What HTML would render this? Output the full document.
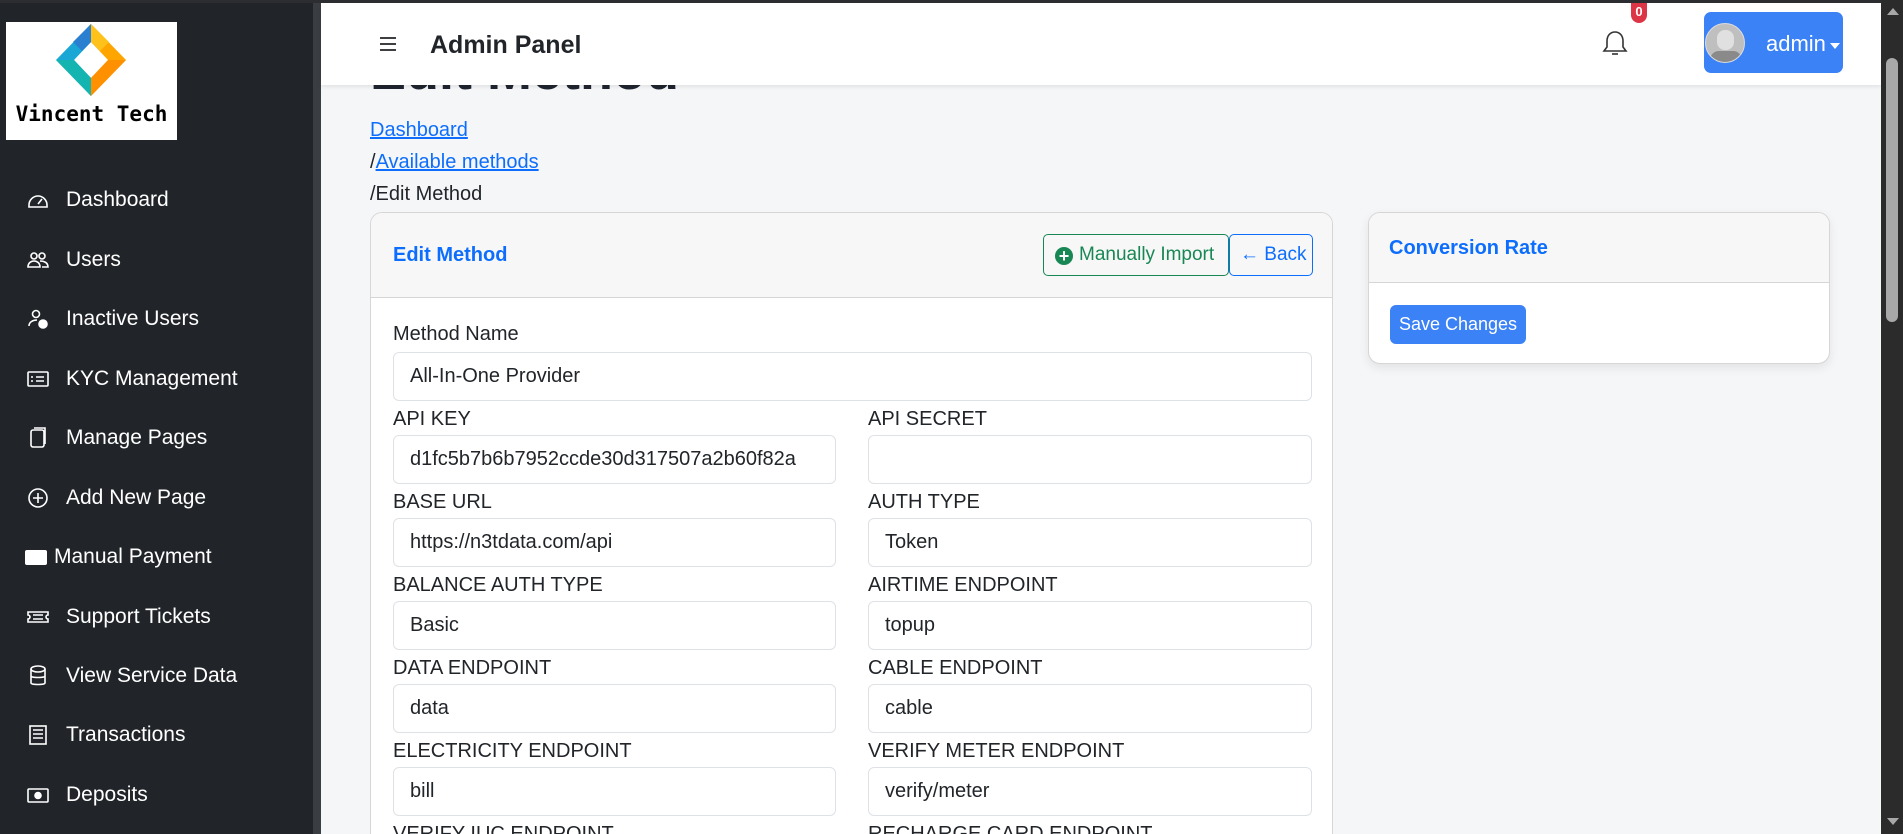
<!DOCTYPE html>
<html><head><meta charset="utf-8"><style>
*{box-sizing:border-box;margin:0;padding:0}
html{width:1903px;height:834px;overflow:hidden}
body{width:1903px;height:834px;overflow:hidden;font-family:"Liberation Sans",sans-serif;background:#f5f6f8;position:relative;color:#212529}
.top{position:absolute;left:0;top:0;width:1903px;height:3px;background:#2b2d31;z-index:20}
.side{position:absolute;left:0;top:0;width:313px;height:834px;background:#212529}
.sbar{position:absolute;left:313px;top:0;width:8px;height:834px;background:#3a3d42}
.logo{position:absolute;left:6px;top:22px;width:171px;height:118px;background:#fff;overflow:hidden}
.logo .t{position:absolute;left:0;right:0;top:80px;text-align:center;font:bold 21px "DejaVu Sans Mono","Liberation Mono",monospace;letter-spacing:0;white-space:nowrap;color:#000}
.mi{position:absolute;left:26px;color:#fff;font-size:21px;display:flex;align-items:center}
.mi svg{width:24px;height:24px;margin-right:16px}
.hdr{position:absolute;left:321px;top:3px;width:1560px;height:82px;background:#fff;box-shadow:0 2px 4px rgba(0,0,0,.08);z-index:10}
h1{position:absolute;left:370px;top:40px;font-size:54px;font-weight:bold;color:#1f2530}
.bc{position:absolute;left:370px;font-size:20px}
.bc a{color:#0d6efd;text-decoration:underline}
.card{position:absolute;background:#fff;border:1px solid #d6d6d6;border-radius:12px;overflow:hidden}
.ch{background:#f7f7f7;border-bottom:1px solid #d6d6d6;position:relative}
.ct{position:absolute;color:#0d6efd;font-weight:bold;font-size:20px}
.lbl{position:absolute;font-size:20px;color:#212529}
.inp{position:absolute;height:49px;border:1px solid #dee2e6;border-radius:6px;padding-left:16px;font-size:20px;line-height:47px;color:#212529;background:#fff}
.vs{position:absolute;left:1881px;top:0;width:22px;height:834px;background:#2b2b2b;z-index:30}
</style></head><body>
<div class="top"></div>
<div class="side">
<div class="logo">
<svg width="171" height="80" viewBox="0 0 171 80" style="position:absolute;left:0;top:0">
<polygon points="85,2 50,38 85,74 85,56 68,38 85,20" fill="#1aa7d6"/>
<polygon points="50,38 85,74 85,56 68,38" fill="#14b5b0"/>
<polygon points="85,2 120,38 85,74 85,56 102,38 85,20" fill="#ffa500"/>
<polygon points="120,38 85,74 85,56 102,38" fill="#ff9000"/>
<polygon points="85,2 67,20 76,29 85,20" fill="#2a7fd1"/>
<polygon points="85,2 103,20 94,29 85,20" fill="#ffc21a"/>
</svg>
<div class="t">Vincent Tech</div></div>
</div>
<div class="sbar"></div>
<div class="mi" style="top:188px"><svg viewBox="0 0 24 24" fill="none" stroke="#fff" stroke-width="1.6"><path d="M3 17a9 9 0 1 1 18 0v2H3z"/><path d="M12 16l4-5"/></svg>Dashboard</div>
<div class="mi" style="top:248px"><svg viewBox="0 0 24 24" fill="none" stroke="#fff" stroke-width="1.6"><circle cx="8" cy="8" r="3"/><circle cx="16" cy="8" r="3"/><path d="M2 19c0-4 3-6 6-6s6 2 6 6zM14 13c3 0 8 1 8 6h-6"/></svg>Users</div>
<div class="mi" style="top:307px"><svg viewBox="0 0 24 24" fill="none" stroke="#fff" stroke-width="1.6"><circle cx="10" cy="7" r="3.5"/><path d="M3 19c0-4 4-6 8-6"/><circle cx="17" cy="17" r="4" fill="#fff"/></svg>Inactive Users</div>
<div class="mi" style="top:367px"><svg viewBox="0 0 24 24" fill="none" stroke="#fff" stroke-width="1.6"><rect x="2" y="5" width="20" height="14" rx="1"/><path d="M10 10h8M10 14h8M5 10h2M5 14h2"/></svg>KYC Management</div>
<div class="mi" style="top:426px"><svg viewBox="0 0 24 24" fill="none" stroke="#fff" stroke-width="1.6"><rect x="5" y="4" width="13" height="17" rx="2"/><path d="M8 2h11v16"/></svg>Manage Pages</div>
<div class="mi" style="top:486px"><svg viewBox="0 0 24 24" fill="none" stroke="#fff" stroke-width="1.6"><circle cx="12" cy="12" r="9"/><path d="M12 7v10M7 12h10"/></svg>Add New Page</div>
<div class="mi" style="top:545px;left:24px"><svg viewBox="0 0 24 24" fill="#fff" style="margin-right:6px"><rect x="1" y="5" width="22" height="15" rx="2"/></svg>Manual Payment</div>
<div class="mi" style="top:605px"><svg viewBox="0 0 24 24" fill="none" stroke="#fff" stroke-width="1.6"><path d="M2 7h20v3a2 2 0 0 0 0 4v3H2v-3a2 2 0 0 0 0-4z"/><path d="M7 10h10M7 14h10"/></svg>Support Tickets</div>
<div class="mi" style="top:664px"><svg viewBox="0 0 24 24" fill="none" stroke="#fff" stroke-width="1.6"><ellipse cx="12" cy="5" rx="7" ry="3"/><path d="M5 5v14c0 2 14 2 14 0V5M5 12c0 2 14 2 14 0"/></svg>View Service Data</div>
<div class="mi" style="top:723px"><svg viewBox="0 0 24 24" fill="none" stroke="#fff" stroke-width="1.6"><rect x="4" y="3" width="16" height="18"/><path d="M7 7h10M7 11h10M7 15h10"/></svg>Transactions</div>
<div class="mi" style="top:783px"><svg viewBox="0 0 24 24" fill="none" stroke="#fff" stroke-width="1.6"><rect x="2" y="6" width="20" height="13" rx="1"/><circle cx="12" cy="12.5" r="3" fill="#fff"/></svg>Deposits</div>

<h1>Edit Method</h1>
<div class="hdr">
<svg style="position:absolute;left:58px;top:33px" width="18" height="16" viewBox="0 0 18 16" stroke="#212529" stroke-width="1.8"><path d="M1 2h16M1 8h16M1 14h16"/></svg>
<div style="position:absolute;left:109px;top:28px;font-size:25px;font-weight:bold;color:#212529">Admin Panel</div>
<svg style="position:absolute;left:1281px;top:26px" width="26" height="30" viewBox="0 0 26 30" fill="none" stroke="#333" stroke-width="1.6"><path d="M13 3c-5 0-8 4-8 9v6l-3 4h22l-3-4v-6c0-5-3-9-8-9z"/><path d="M10 25h6"/></svg>
<div style="position:absolute;left:1310px;top:0;width:16px;height:20px;background:#dc3545;border-radius:0 0 8px 8px;color:#fff;font-size:13px;font-weight:bold;text-align:center;line-height:18px">0</div>
<div style="position:absolute;left:1383px;top:9px;width:139px;height:61px;background:#3b82f6;border-radius:7px">
<div style="position:absolute;left:1px;top:11px;width:40px;height:40px;border-radius:50%;border:1px solid #ddd;background:#bfbfbf;overflow:hidden"><div style="position:absolute;left:11px;top:6px;width:17px;height:20px;border-radius:8px;background:#e0e0e0"></div><div style="position:absolute;left:4px;top:27px;width:32px;height:18px;border-radius:10px;background:#8a8a8a"></div></div>
<div style="position:absolute;left:62px;top:19px;color:#fff;font-size:22px">admin</div>
<div style="position:absolute;left:126px;top:31px;border:5px solid transparent;border-top:6px solid #fff"></div>
</div>
</div>

<div class="bc" style="top:119px"><a>Dashboard</a></div>
<div class="bc" style="top:151px">/<a>Available methods</a></div>
<div class="bc" style="top:183px">/Edit Method</div>

<div class="card" style="left:370px;top:212px;width:963px;height:640px">
<div class="ch" style="height:85px">
<div class="ct" style="left:22px;top:31px">Edit Method</div>
<div style="position:absolute;left:672px;top:21px;width:186px;height:42px;border:1px solid #198754;border-radius:5px;color:#198754;font-size:19px;line-height:40px;padding-left:11px"><span style="display:inline-block;width:18px;height:18px;border-radius:50%;background:#198754;color:#fff;font-weight:bold;font-size:18px;line-height:18px;text-align:center;vertical-align:-2px;margin-right:6px">+</span>Manually Import</div>
<div style="position:absolute;left:858px;top:21px;width:84px;height:42px;border:1px solid #0d6efd;border-radius:5px;color:#0d6efd;font-size:19px;line-height:40px;padding-left:10px"><b>&#8592;</b> Back</div>
</div>
</div>
<div class="lbl" style="left:393px;top:323px">Method Name</div>
<div class="inp" style="left:393px;top:352px;width:919px">All-In-One Provider</div>

<div class="lbl" style="left:393px;top:408px">API KEY</div><div class="lbl" style="left:868px;top:408px">API SECRET</div>
<div class="inp" style="left:393px;top:435px;width:443px;overflow:hidden;white-space:nowrap">d1fc5b7b6b7952ccde30d317507a2b60f82a</div><div class="inp" style="left:868px;top:435px;width:444px"></div>

<div class="lbl" style="left:393px;top:491px">BASE URL</div><div class="lbl" style="left:868px;top:491px">AUTH TYPE</div>
<div class="inp" style="left:393px;top:518px;width:443px">https://n3tdata.com/api</div><div class="inp" style="left:868px;top:518px;width:444px">Token</div>

<div class="lbl" style="left:393px;top:574px">BALANCE AUTH TYPE</div><div class="lbl" style="left:868px;top:574px">AIRTIME ENDPOINT</div>
<div class="inp" style="left:393px;top:601px;width:443px">Basic</div><div class="inp" style="left:868px;top:601px;width:444px">topup</div>

<div class="lbl" style="left:393px;top:657px">DATA ENDPOINT</div><div class="lbl" style="left:868px;top:657px">CABLE ENDPOINT</div>
<div class="inp" style="left:393px;top:684px;width:443px">data</div><div class="inp" style="left:868px;top:684px;width:444px">cable</div>

<div class="lbl" style="left:393px;top:740px">ELECTRICITY ENDPOINT</div><div class="lbl" style="left:868px;top:740px">VERIFY METER ENDPOINT</div>
<div class="inp" style="left:393px;top:767px;width:443px">bill</div><div class="inp" style="left:868px;top:767px;width:444px">verify/meter</div>
<div class="lbl" style="left:393px;top:823px">VERIFY IUC ENDPOINT</div><div class="lbl" style="left:868px;top:823px">RECHARGE CARD ENDPOINT</div>

<div class="card" style="left:1368px;top:212px;width:462px;height:152px;box-shadow:0 4px 10px rgba(0,0,0,.08)">
<div class="ch" style="height:70px"><div class="ct" style="left:20px;top:24px">Conversion Rate</div></div>
<div style="position:absolute;left:21px;top:92px;width:136px;height:39px;background:#3b82f6;border-radius:6px;color:#fff;font-size:18px;line-height:39px;text-align:center">Save Changes</div>
</div>

<div class="vs"><div style="position:absolute;left:6px;top:8px;border:6px solid transparent;border-bottom:7px solid #a8a8a8;border-top:0"></div><div style="position:absolute;left:5px;top:58px;width:12px;height:264px;border-radius:6px;background:#a8a8a8"></div><div style="position:absolute;left:6px;top:818px;border:6px solid transparent;border-top:7px solid #a8a8a8;border-bottom:0"></div></div>
</body></html>
